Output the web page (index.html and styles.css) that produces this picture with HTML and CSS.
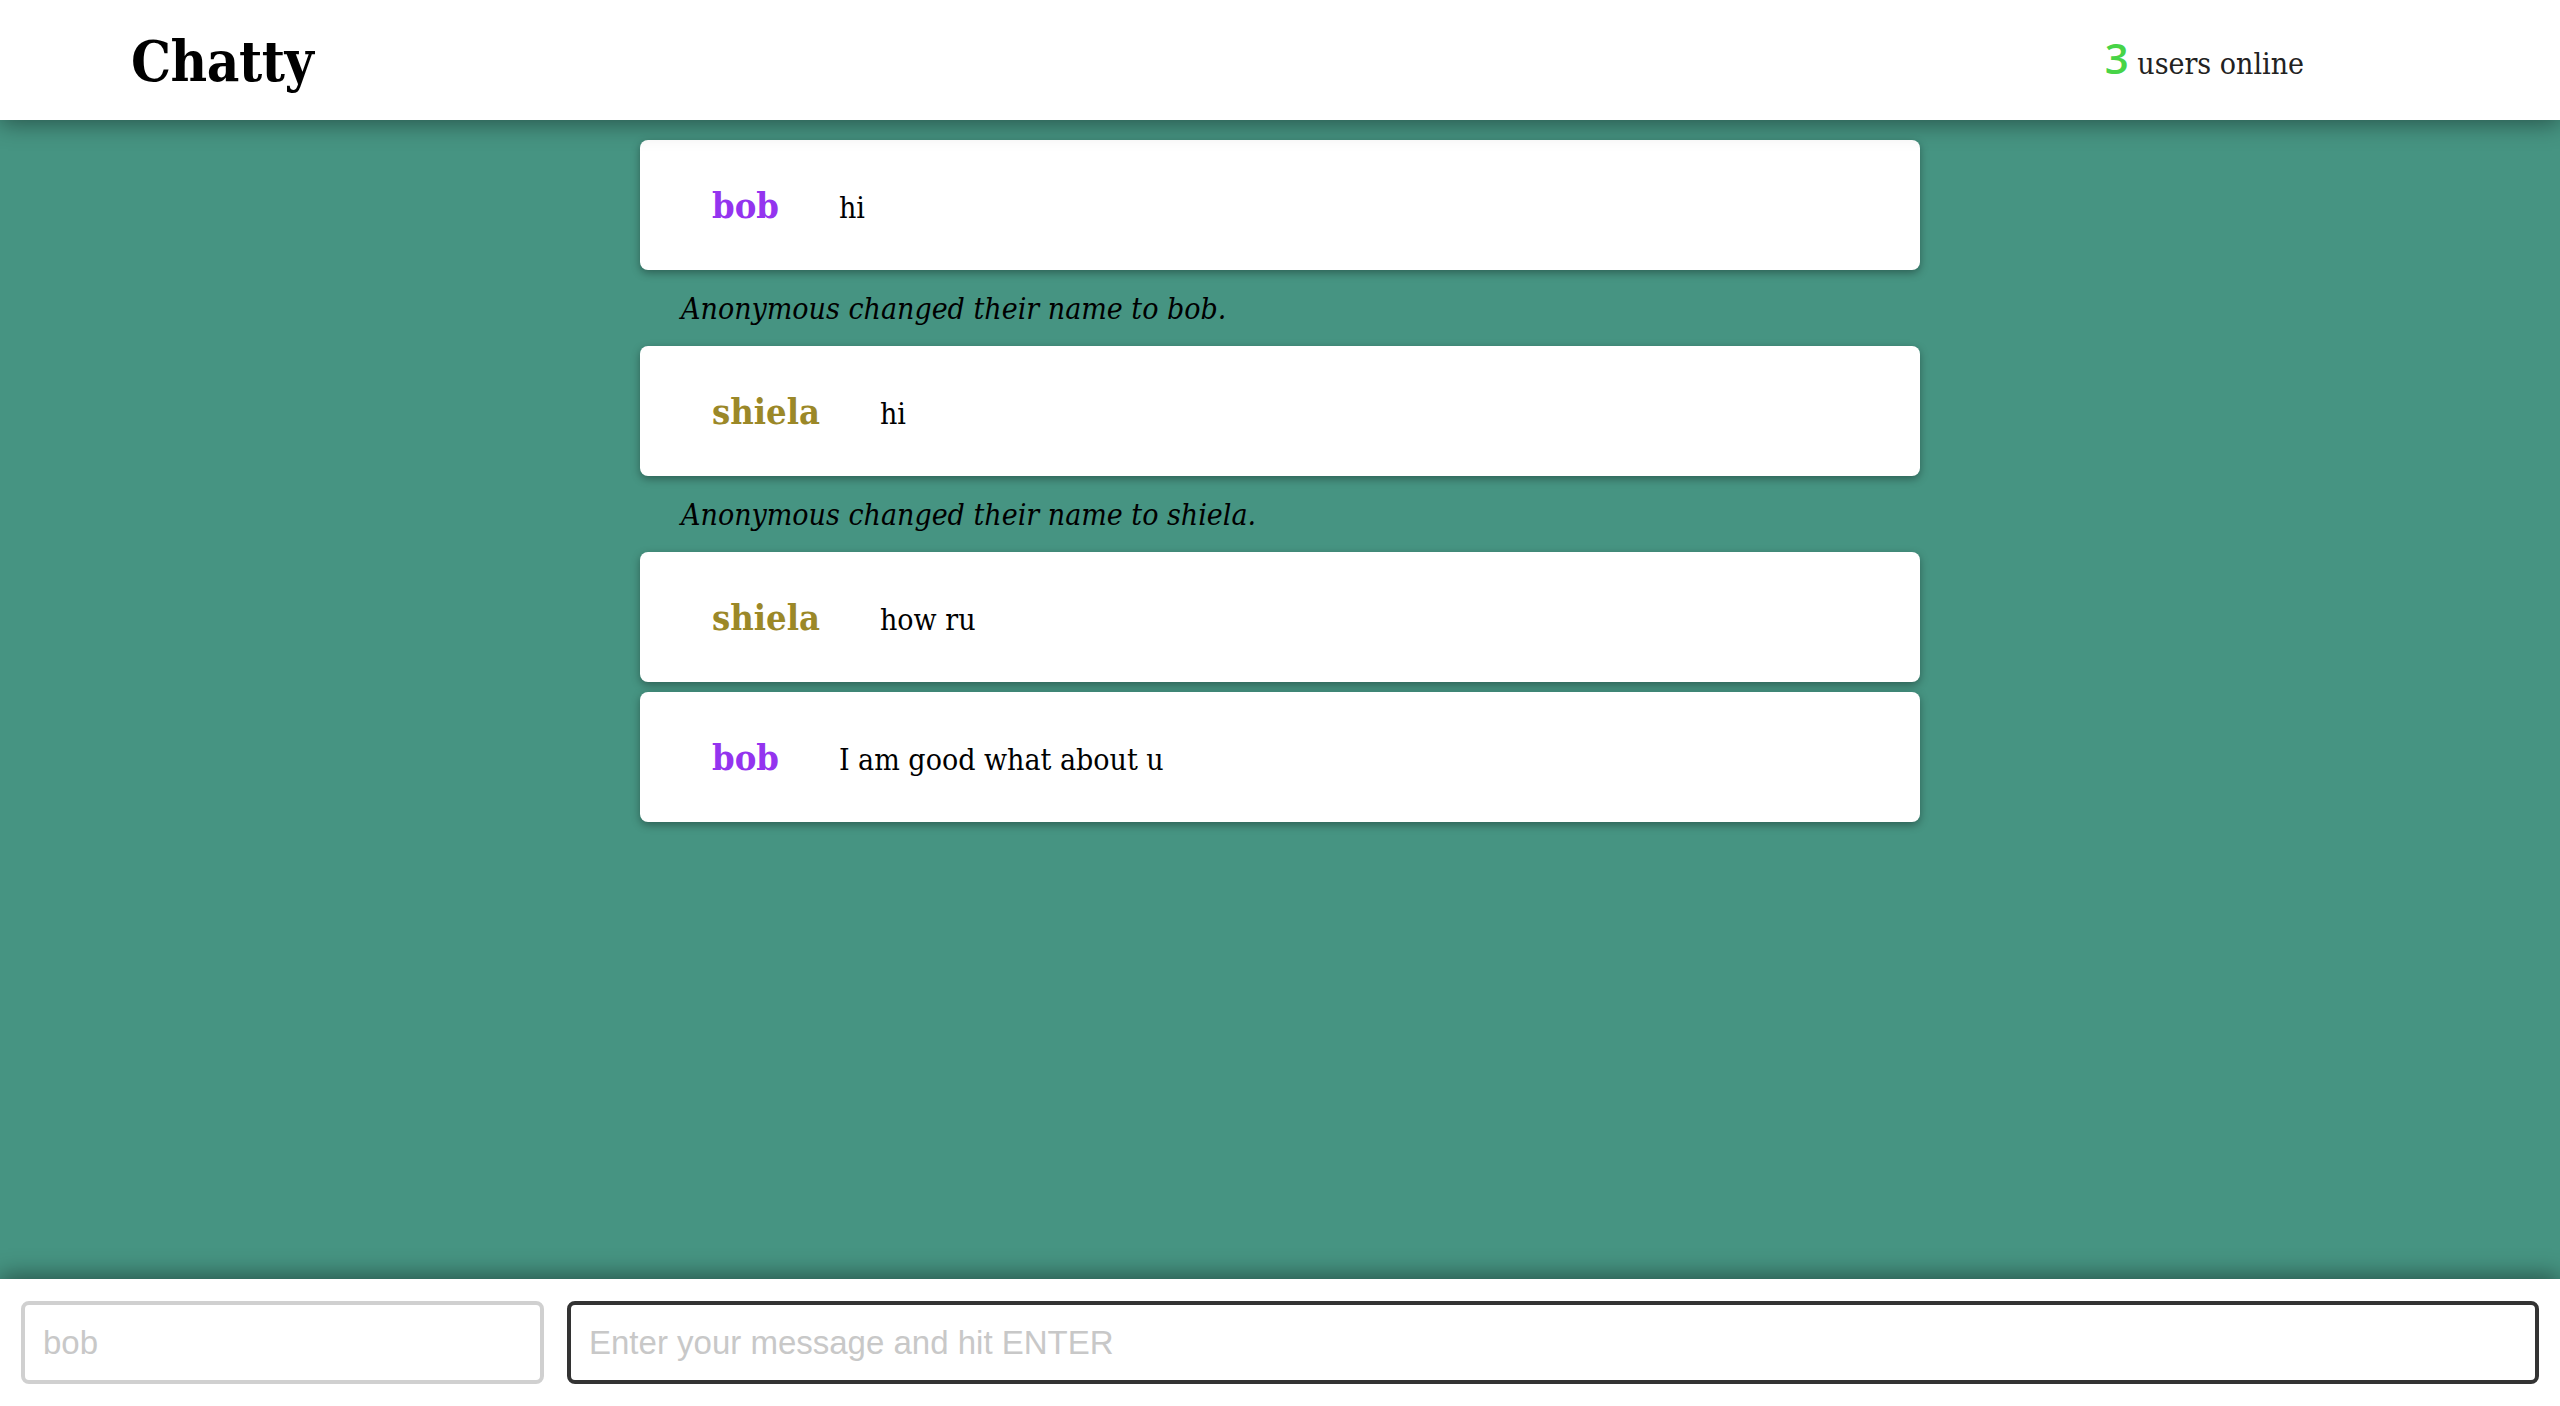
FILE: index.html
```html
<!DOCTYPE html>
<html lang="en">
<head>
<meta charset="utf-8">
<title>Chatty</title>
<link rel="stylesheet" href="styles.css">
</head>
<body>
<div class="app">
  <header class="navbar">
    <h1 class="brand">Chatty</h1>
    <div class="online"><span class="count">3</span> users online</div>
  </header>
  <main class="messages">
    <div class="message">
      <span class="username purple">bob</span>
      <span class="content">hi</span>
    </div>
    <div class="system">Anonymous changed their name to bob.</div>
    <div class="message">
      <span class="username olive">shiela</span>
      <span class="content">hi</span>
    </div>
    <div class="system">Anonymous changed their name to shiela.</div>
    <div class="message">
      <span class="username olive">shiela</span>
      <span class="content">how ru</span>
    </div>
    <div class="message">
      <span class="username purple">bob</span>
      <span class="content">I am good what about u</span>
    </div>
  </main>
  <footer class="chatbar">
    <input class="field name" type="text" placeholder="bob">
    <input class="field msg" type="text" placeholder="Enter your message and hit ENTER">
  </footer>
</div>
</body>
</html>
```

FILE: styles.css
```css
* { box-sizing: border-box; }
html, body { margin: 0; padding: 0; height: 100%; }
body {
  background: #469482;
  font-family: "DejaVu Serif", "Liberation Serif", serif;
  font-stretch: condensed;
  color: #000;
}
.app {
  display: flex;
  flex-direction: column;
  height: 100vh;
  overflow: hidden;
}
.navbar {
  flex: 0 0 120px;
  height: 120px;
  background: #fff;
  display: flex;
  align-items: center;
  justify-content: space-between;
  padding: 0 256px 0 131px;
  box-shadow: 0 4px 22px rgba(0, 0, 0, 0.42);
  position: relative;
  z-index: 2;
}
.brand {
  margin: 0;
  font-size: 56px;
  font-weight: bold;
  letter-spacing: -0.5px;
  line-height: 1;
  padding-top: 1px;
}
.online {
  font-size: 30px;
  color: #222;
  padding-bottom: 3px;
}
.count {
  font-family: "Open Sans", "DejaVu Sans", sans-serif;
  font-stretch: normal;
  color: #47d447;
  font-size: 42px;
  font-weight: 600;
  line-height: 1;
}
.messages {
  flex: 1;
  width: 1280px;
  margin: 0 auto;
  padding-top: 20px;
}
.message {
  height: 130px;
  background: #fff;
  border-radius: 8px;
  box-shadow: 0 3px 8px rgba(0, 0, 0, 0.35);
  display: flex;
  align-items: center;
  padding-left: 72px;
}
.message + .message { margin-top: 10px; }
.username {
  font-size: 36px;
  font-weight: bold;
  margin-right: 60px;
}
.purple { color: #9434ef; }
.olive { color: #9b8828; }
.content {
  font-size: 30px;
  padding-top: 4px;
}
.system {
  height: 76px;
  display: flex;
  align-items: center;
  padding-left: 41px;
  font-style: italic;
  font-size: 30px;
}
.chatbar {
  flex: 0 0 127px;
  height: 127px;
  background: #fff;
  display: flex;
  align-items: center;
  gap: 23px;
  padding: 0 21px;
  box-shadow: 0 -4px 22px rgba(0, 0, 0, 0.42);
  position: relative;
  z-index: 2;
}
.field {
  height: 83px;
  border-radius: 8px;
  border: 4px solid #d0d0d0;
  background: #fff;
  font-family: "Liberation Sans", Arial, sans-serif;
  font-size: 33px;
  padding: 0 18px;
  outline: none;
  color: #333;
}
.field::placeholder { color: #c8c8c8; }
.name { flex: 0 0 523px; }
.msg { flex: 1; border-color: #333; }
```
